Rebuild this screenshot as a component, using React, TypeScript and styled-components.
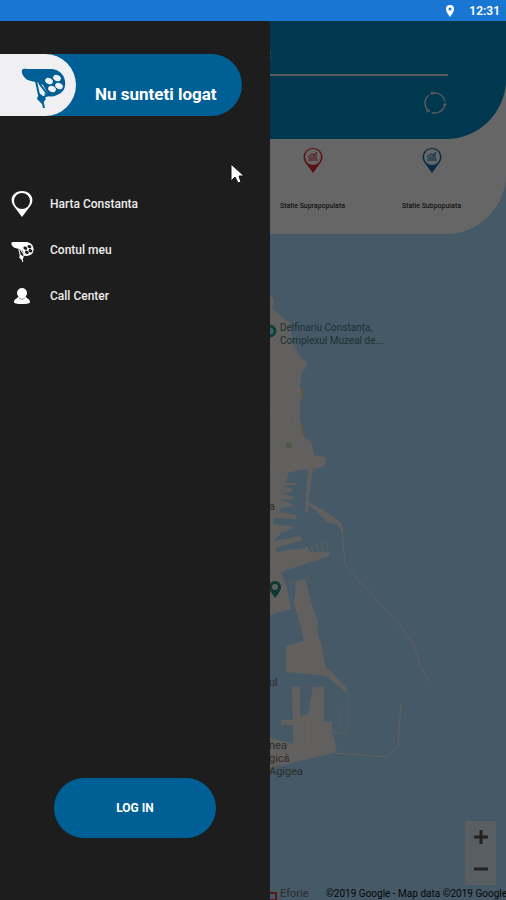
import React from "react";
import styled, { createGlobalStyle } from "styled-components";

const GlobalStyle = createGlobalStyle`
  * { box-sizing: border-box; }
  body { margin: 0; background: #1d1d1d; font-family: Roboto, "Liberation Sans", sans-serif; }
  button, input { font-family: inherit; }
`;

const Page = styled.div`
  display: flex;
  flex-direction: column;
  min-height: 100vh;
`;

const StatusBar = styled.header`
  display: flex;
  align-items: center;
  justify-content: flex-end;
  gap: 14px;
  height: 21px;
  padding: 0 6px;
  background: #1976d2;
  color: #fff;
  font-size: 12px;
  font-weight: 600;
`;

const Screen = styled.div`
  position: relative;
  flex: 1;
  display: flex;
  flex-direction: column;
  overflow: hidden;
`;

const MapCanvas = styled.main`
  position: absolute;
  inset: 0;
  background: #acdeff;
  overflow: hidden;
`;

const MapDrawing = styled.svg`
  display: block;
  width: 100%;
  height: 100%;
`;

const MapLabel = styled.div<{ $x: number; $y: number; $color?: string; $small?: boolean }>`
  position: absolute;
  left: ${(p) => p.$x}px;
  top: ${(p) => p.$y}px;
  color: ${(p) => p.$color ?? "#6f6f6f"};
  font-size: ${(p) => (p.$small ? 10 : 11)}px;
  line-height: 13px;
  white-space: pre;
`;

const ZoomControls = styled.div`
  position: absolute;
  right: 10px;
  bottom: 15px;
  display: flex;
  flex-direction: column;
  width: 31px;
  background: #dcecf5;
`;

const ZoomButton = styled.button`
  display: grid;
  place-items: center;
  height: 32px;
  padding: 0;
  border: 0;
  background: none;
  color: #555;
`;

const Attribution = styled.div`
  position: absolute;
  left: 326px;
  bottom: 0;
  color: #111;
  font-size: 10px;
  line-height: 12px;
  white-space: nowrap;
`;

const TopPanel = styled.section`
  position: relative;
  background: #fff;
  border-radius: 0 0 60px 0;
`;

const SearchHeader = styled.div`
  display: flex;
  flex-direction: column;
  gap: 14px;
  height: 118px;
  padding: 16px 58px 0 30px;
  background: #008dc8;
  border-radius: 0 0 60px 0;
`;

const StationLine = styled.div`
  height: 39px;
  padding-left: 234px;
  border-bottom: 2px solid #e0e0e0;
  color: #9ab;
  font-size: 14px;
  line-height: 32px;
`;

const RefreshButton = styled.button`
  align-self: flex-end;
  display: grid;
  padding: 0;
  border: 0;
  background: none;
`;

const Legend = styled.div`
  display: flex;
  justify-content: flex-end;
  height: 95px;
  padding: 8px 15px 0;
`;

const LegendItem = styled.div`
  display: flex;
  flex-direction: column;
  align-items: center;
  gap: 27px;
  width: 119px;
  color: #000;
  font-size: 7px;
  line-height: 10px;
`;

const Scrim = styled.div`
  position: absolute;
  inset: 0;
  background: rgba(0, 0, 0, 0.6);
`;

const Drawer = styled.aside`
  position: absolute;
  inset: 0 auto 0 0;
  display: flex;
  flex-direction: column;
  width: 270px;
  padding: 33px 0 62px;
  background: #1d1d1d;
  color: #fff;
`;

const Profile = styled.div`
  display: flex;
  width: 242px;
  height: 62px;
  background: #005f95;
  border-radius: 0 31px 31px 0;
`;

const Avatar = styled.div`
  display: flex;
  align-items: center;
  width: 76px;
  padding-left: 21px;
  background: #f0f0f2;
  border-radius: 0 31px 31px 0;
`;

const ProfileName = styled.h1`
  margin: 0;
  padding: 30px 0 0 19px;
  font-size: 17px;
  line-height: 20px;
  font-weight: 700;
`;

const Menu = styled.nav`
  display: flex;
  flex-direction: column;
  margin-top: 65px;
`;

const MenuLink = styled.a`
  display: flex;
  align-items: center;
  height: 46px;
  padding-left: 10px;
  gap: 16px;
  color: #eee;
  font-size: 12px;
  font-weight: 500;
  text-decoration: none;
`;

const MenuIcon = styled.span`
  display: grid;
  place-items: center;
  width: 24px;
`;

const LoginButton = styled.button`
  align-self: center;
  width: 162px;
  height: 60px;
  margin-top: auto;
  border: 0;
  border-radius: 30px;
  background: #005f95;
  color: #fff;
  font-size: 12px;
  font-weight: 700;
`;

const Pointer = styled.svg`
  position: absolute;
  left: 230px;
  top: 142px;
`;

function Helmet({ size, fill, hole }: { size: number; fill: string; hole: string }) {
  return (
    <svg width={size} height={size} viewBox="0 0 45 45" aria-hidden="true">
      <path
        d="M1 7C2 5 5 6 9 6L31 6C38 7 43 11 44 18C45 25 42 30 36 32C32 34 28 34 24 32L18 20C15 18 9 19 5 16C2 13 0 10 1 7Z"
        fill={fill}
      />
      <path d="M17 20L21 30L27 31L22 22Z" fill={hole} />
      <path d="M15 18L18 32M18 20L27 32M27 32L21 35M21 36L23 45" stroke={fill} strokeWidth="2" fill="none" />
      <path d="M18 30L22 33L25 36L21 41L16 36Z" fill={fill} />
      <g fill={hole}>
        <ellipse cx="36" cy="15" rx="4" ry="3" transform="rotate(25 36 15)" />
        <ellipse cx="28" cy="18" rx="4" ry="3" transform="rotate(25 28 18)" />
        <ellipse cx="38" cy="23" rx="4" ry="3" transform="rotate(25 38 23)" />
        <ellipse cx="31" cy="26" rx="4" ry="3" transform="rotate(25 31 26)" />
      </g>
    </svg>
  );
}

function StationPin({ color }: { color: string }) {
  return (
    <svg width="20" height="27" viewBox="0 0 20 27" aria-hidden="true">
      <path d="M10 26L2 15C-2 8 3 1 10 1S22 8 18 15Z" fill={color} />
      <circle cx="10" cy="10" r="8" fill="#fff" />
      <path d="M5 13H15M7 12V10M9 12V9M11 12V8M13 12V6M5 10L9 7L11 8L14 5" stroke={color} strokeWidth="1" fill="none" />
    </svg>
  );
}

function Land() {
  return (
    <MapDrawing viewBox="0 21 506 879" preserveAspectRatio="xMinYMin slice" aria-hidden="true">
      <g fill="#f3efec">
        <path d="M0 290L270 295L274 300L272 308L281 316L290 323L292 342L301 358L307 362L306 368L302 372L300 386L303 393L300 402L300 420L303 428L304 437L311 442L315 455L325 457L326 464L319 468L311 469L289 472L286 483L296 483V485L282 486L293 489L292 492L281 493L294 497V499L280 500L293 504V506L281 508L280 512L296 515L297 519L274 518L273 524L296 527L281 533L274 541L300 536L303 540L276 548L276 552L308 547L310 552L329 552V556L281 572L286 584L291 609L270 615H0Z" />
        <path d="M296 582L305 579L311 602L318 622L317 632L322 647L326 668L332 672L348 690L346 692L326 676L286 672V646L304 641L299 620L294 604Z" />
        <path d="M292 687H300V716L308 714L313 687H324V721L332 722V732L337 752L304 760L270 768H0V742L270 738L293 744V725H281V720H293Z" />
        <path d="M308 468H313L310 490L308 502L316 506L331 515L341 523L344 531L341 532L338 525L327 522L315 510L308 504V512H305Z" />
      </g>
      <g stroke="#f3efec" fill="none">
        <path d="M342 528L345 565L374 597L397 622L413 643L421 667L430 683" />
        <path d="M331 732L347 734M335 753L388 757L398 745L401 704" />
        <path d="M313 552L311 546M318 552L316 543M323 552L321 542M328 551L326 542" />
        <path d="M288 583L315 577M339 734V708M348 692V734" opacity="0.5" />
      </g>
      <g stroke="#fff" fill="none" opacity="0.6">
        <path d="M270 330L284 350L290 375M272 349L291 391L288 425L297 454M270 413L287 425M270 470L322 459M270 562L306 551M307 716V749M270 757L334 748" />
      </g>
      <path d="M302 387L303 398M301 425L305 437M270 769L279 765" stroke="#e0ddaa" strokeWidth="2" />
      <circle cx="289" cy="445" r="3" fill="#b8dfb5" />
      <circle cx="270" cy="331" r="5" fill="#acdeff" stroke="#16a78c" strokeWidth="3" />
      <path d="M275 598C271 592 269 590 269 587A6 6 0 0 1 281 587C281 590 279 593 275 598Z" fill="#28887d" />
      <circle cx="275" cy="587" r="3" fill="#f3efec" />
      <path d="M270 893H276V900H270" fill="none" stroke="#d63a37" strokeWidth="2" />
    </MapDrawing>
  );
}

export default function App() {
  return (
    <>
      <GlobalStyle />
      <Page>
        <StatusBar>
          <svg width="10" height="13" viewBox="0 0 10 13" aria-label="Location">
            <path d="M5 13C2 9 1 7 1 5A4 4 0 0 1 9 5C9 7 8 9 5 13Z" fill="#fff" />
            <circle cx="5" cy="5" r="1.5" fill="#1976d2" />
          </svg>
          <time>12:31</time>
        </StatusBar>
        <Screen>
          <MapCanvas>
            <Land />
            <MapLabel $x={280} $y={300} $color="#477d80" $small>{"Delfinariu Constanța,\nComplexul Muzeal de..."}</MapLabel>
            <MapLabel $x={269} $y={479}>a</MapLabel>
            <MapLabel $x={269} $y={655}>ul</MapLabel>
            <MapLabel $x={269} $y={718}>{"nea\ngică\nAgigea"}</MapLabel>
            <MapLabel $x={280} $y={866}>Eforie</MapLabel>
            <ZoomControls>
              <ZoomButton aria-label="Zoom in">
                <svg width="16" height="16" viewBox="0 0 16 16"><path d="M1 8H15M8 1V15" stroke="currentColor" strokeWidth="3" /></svg>
              </ZoomButton>
              <ZoomButton aria-label="Zoom out">
                <svg width="16" height="16" viewBox="0 0 16 16"><path d="M1 8H15" stroke="currentColor" strokeWidth="3" /></svg>
              </ZoomButton>
            </ZoomControls>
            <Attribution>©2019 Google - Map data ©2019 Google</Attribution>
          </MapCanvas>
          <TopPanel>
            <SearchHeader>
              <StationLine>e</StationLine>
              <RefreshButton aria-label="Refresh">
                <svg width="26" height="26" viewBox="0 0 26 26">
                  <circle cx="13" cy="13" r="10" fill="none" stroke="#d5dce0" strokeWidth="1.5" strokeDasharray="19 2" />
                  <path d="M9 1L13 3L10 5ZM21 14H25L23 17ZM4 18L8 20L5 23Z" fill="#d5dce0" />
                </svg>
              </RefreshButton>
            </SearchHeader>
            <Legend>
              <LegendItem><StationPin color="#e0282d" />Statie Suprapopulata</LegendItem>
              <LegendItem><StationPin color="#0872b9" />Statie Subpopulata</LegendItem>
            </Legend>
          </TopPanel>
          <Scrim />
          <Drawer>
            <Profile>
              <Avatar><Helmet size={45} fill="#005f95" hole="#f0f0f2" /></Avatar>
              <ProfileName>Nu sunteti logat</ProfileName>
            </Profile>
            <Menu>
              <MenuLink href="#harta">
                <MenuIcon>
                  <svg width="22" height="28" viewBox="0 0 22 28" aria-hidden="true">
                    <path fillRule="evenodd" d="M11 27L2 15C-2 8 3 1 11 1S24 8 20 15ZM11 3A8 8 0 1 0 11 19A8 8 0 0 0 11 3Z" fill="#fff" />
                  </svg>
                </MenuIcon>
                Harta Constanta
              </MenuLink>
              <MenuLink href="#cont">
                <MenuIcon><Helmet size={23} fill="#fff" hole="#1d1d1d" /></MenuIcon>
                Contul meu
              </MenuLink>
              <MenuLink href="#call-center">
                <MenuIcon>
                  <svg width="18" height="18" viewBox="0 0 18 18" aria-hidden="true">
                    <circle cx="9" cy="6" r="5" fill="#fff" />
                    <path d="M1 15C1 12 4 12 6 9H12C14 12 17 12 17 15Q17 17 9 17T1 15Z" fill="#fff" />
                    <path d="M6 11Q9 14 12 11" stroke="#999" fill="none" />
                  </svg>
                </MenuIcon>
                Call Center
              </MenuLink>
            </Menu>
            <LoginButton>LOG IN</LoginButton>
          </Drawer>
          <Pointer width="15" height="22" viewBox="0 0 15 22" aria-hidden="true">
            <path d="M1 1V18L5 14L8 20L11 19L9 13H14Z" fill="#fff" stroke="#111" />
          </Pointer>
        </Screen>
      </Page>
    </>
  );
}
